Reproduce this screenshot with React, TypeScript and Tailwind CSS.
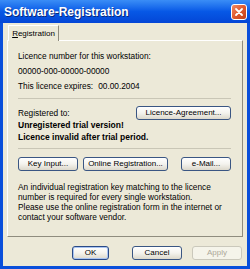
import React from "react"

const font = { fontFamily: '"Liberation Sans", Arial, sans-serif' }

function XpButton({ label, w, primary, disabled }: { label: string; w: string; primary?: boolean; disabled?: boolean }) {
  const base = "h-[14px] flex items-center justify-center rounded-[3px] text-[8px] leading-none border"
  if (disabled) {
    return <div className={`${base} ${w} border-[#CAC8BB] bg-[#F5F4EA] text-[#ACA899]`}>{label}</div>
  }
  return (
    <div
      className={`${base} ${w} ${primary ? "border-[#2A4A86] shadow-[inset_0_0_0_1px_#A9C4F2]" : "border-[#3A5683]"} bg-gradient-to-b from-[#FFFFFF] via-[#F4F3EE] to-[#DCD8CB] text-black`}
    >
      {label}
    </div>
  )
}

export default function App() {
  return (
    <div style={font} className="w-[250px] h-[269px] flex flex-col bg-[#0A4FDB] select-none">
      {/* title bar */}
      <div className="h-[23px] shrink-0 flex items-center justify-between pl-[4px] pr-[3px] bg-gradient-to-b from-[#3A8DF6] via-[#0758E6] to-[#0446D6]">
        <span className="text-white font-bold text-[12px] leading-none [text-shadow:1px_1px_0_#0A2A7A]">
          Software-Registration
        </span>
        <div className="w-[16px] h-[16px] rounded-[3px] border border-white bg-gradient-to-br from-[#F08A63] via-[#E0592D] to-[#C2401A] flex items-center justify-center">
          <svg width="10" height="10" viewBox="0 0 10 10">
            <path d="M2 2 L8 8 M8 2 L2 8" stroke="white" strokeWidth="1.8" strokeLinecap="round" />
          </svg>
        </div>
      </div>

      {/* body */}
      <div className="flex-1 mx-[3px] mb-[3px] bg-[#ECE9D8] flex flex-col pl-[4px] pr-[4px] pt-[2px]">
        <div className="flex pl-[1px]">
          <div className="relative z-10 -mb-px h-[16px] w-[51px] flex items-center justify-center bg-[#ECE9D8] border-t border-l border-white border-r border-r-[#8F8C7E] text-[8px] text-black">
            <span>
              <span className="underline">R</span>egistration
            </span>
          </div>
        </div>

        <div className="h-[197px] flex flex-col border border-t-white border-l-white border-r-[#8F8C7E] border-b-[#8F8C7E] pl-[10px] pr-[10px] pt-[8px] text-[8.3px] text-black">
          <div className="h-[15px] flex items-center">Licence number for this workstation:</div>
          <div className="h-[15px] flex items-center">00000-000-00000-00000</div>
          <div className="h-[15px] flex items-center gap-[5px]">
            <span>This licence expires:</span>
            <span>00.00.2004</span>
          </div>
          <div className="mt-[4px] mr-[1px] border-t border-[#C9C6B6]" />
          <div className="mt-[7px] h-[14px] flex items-center justify-between pr-[1px]">
            <span>Registered to:</span>
            <XpButton label="Licence-Agreement..." w="w-[95px]" />
          </div>
          <div className="h-[12px] flex items-end font-bold text-[8.5px]">Unregistered trial version!</div>
          <div className="h-[10px] flex items-center font-bold text-[8.5px]">Licence invalid after trial period.</div>
          <div className="mt-[6px] mr-[1px] border-t border-[#C9C6B6]" />
          <div className="mt-[8px] flex items-center pr-[1px]">
            <XpButton label="Key Input..." w="w-[60px]" />
            <div className="ml-[5px]">
              <XpButton label="Online Registration..." w="w-[85px]" />
            </div>
            <div className="ml-auto">
              <XpButton label="e-Mail..." w="w-[50px]" />
            </div>
          </div>
          <div className="mt-[11px] leading-[10px] whitespace-nowrap">
            An individual registration key matching to the licence
            <br />
            number is required for every single workstation.
            <br />
            Please use the online registration form in the internet or
            <br />
            contact your software vendor.
          </div>
        </div>

        <div className="mt-[9px] flex items-center justify-end pr-[1px]">
          <XpButton label="OK" w="w-[37px]" primary />
          <div className="ml-[23px]">
            <XpButton label="Cancel" w="w-[50px]" />
          </div>
          <div className="ml-[10px]">
            <XpButton label="Apply" w="w-[50px]" disabled />
          </div>
        </div>
      </div>
    </div>
  )
}
